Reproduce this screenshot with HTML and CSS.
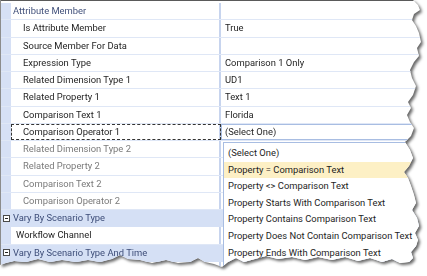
FILE: index.html
```html
<!DOCTYPE html>
<html lang="en">
<head>
  <meta charset="UTF-8">
  <title>Property Grid</title>
  <link rel="stylesheet" href="styles.css">
</head>
<body>
  <div class="frame">
    <div class="sheet">
      <div class="topline"></div>
      <div class="grid">
        <div class="row cat-plain"><div class="strip"></div><div class="name">Attribute Member</div><div class="value"></div></div>
        <div class="row"><div class="strip"></div><div class="name sub">Is Attribute Member</div><div class="value">True</div></div>
        <div class="row"><div class="strip"></div><div class="name sub">Source Member For Data</div><div class="value"></div></div>
        <div class="row"><div class="strip"></div><div class="name sub">Expression Type</div><div class="value">Comparison 1 Only</div></div>
        <div class="row"><div class="strip"></div><div class="name sub">Related Dimension Type 1</div><div class="value">UD1</div></div>
        <div class="row"><div class="strip"></div><div class="name sub">Related Property 1</div><div class="value">Text 1</div></div>
        <div class="row"><div class="strip"></div><div class="name sub">Comparison Text 1</div><div class="value">Florida</div></div>
        <div class="row focus"><div class="strip"></div><div class="name sub">Comparison Operator 1</div><div class="value">(Select One)</div></div>
        <div class="row dim"><div class="strip"></div><div class="name sub">Related Dimension Type 2</div><div class="value"></div></div>
        <div class="row dim"><div class="strip"></div><div class="name sub">Related Property 2</div><div class="value"></div></div>
        <div class="row dim"><div class="strip"></div><div class="name sub">Comparison Text 2</div><div class="value"></div></div>
        <div class="row dim"><div class="strip"></div><div class="name sub">Comparison Operator 2</div><div class="value"></div></div>
        <div class="row cat"><div class="strip"><span class="toggle"></span></div><div class="name">Vary By Scenario Type</div><div class="value"></div></div>
        <div class="row"><div class="strip"></div><div class="name top">Workflow Channel</div><div class="value"></div></div>
        <div class="row cat"><div class="strip"><span class="toggle"></span></div><div class="name">Vary By Scenario Type And Time</div><div class="value"></div></div>
        <div class="row"><div class="strip"></div><div class="name"></div><div class="value"></div></div>
      </div>

      <ul class="dropdown">
        <li>(Select One)</li>
        <li class="hot">Property = Comparison Text</li>
        <li>Property &lt;&gt; Comparison Text</li>
        <li>Property Starts With Comparison Text</li>
        <li>Property Contains Comparison Text</li>
        <li>Property Does Not Contain Comparison Text</li>
        <li>Property Ends With Comparison Text</li>
      </ul>
    </div>
  </div>
</body>
</html>
```

FILE: styles.css
```css
* { margin: 0; padding: 0; box-sizing: border-box; }
body { background: #fff; font-family: Roboto, 'Open Sans', sans-serif; font-size: 9.4px; color: #1e1e1e; width: 427px; height: 276px; overflow: hidden; }

.frame { filter: drop-shadow(2px 2px 1.5px rgba(0,0,0,0.6)); width: 424px; height: 272px; }
.sheet { position: relative; width: 424px; height: 272px; background: #fff; border-left: 1px solid #8c8c8c; overflow: hidden;
  clip-path: polygon(0 0, 413px 0, 418px 5px, 420px 10px, 414px 14px, 412px 20px, 416px 26px, 419px 33px, 421px 42px, 417px 48px, 419px 56px, 414px 62px, 410px 70px, 412px 78px, 416px 86px, 413px 95px, 408px 102px, 411px 108px, 407px 115px, 410px 122px, 414px 128px, 411px 136px, 405px 142px, 410px 150px, 413px 158px, 409px 166px, 404px 172px, 408px 178px, 411px 186px, 414px 195px, 416px 203px, 412px 210px, 417px 218px, 419px 226px, 415px 233px, 418px 240px, 416px 246px, 411px 252px, 413px 258px, 409px 262px, 400px 263px, 392px 259px, 382px 262px, 370px 258px, 358px 261px, 345px 257px, 332px 260px, 318px 257px, 305px 260px, 292px 257px, 278px 259px, 266px 256px, 255px 259px, 244px 262px, 236px 258px, 228px 262px, 222px 267px, 214px 264px, 205px 262px, 198px 258px, 190px 262px, 178px 263px, 166px 260px, 152px 263px, 140px 260px, 128px 259px, 120px 255px, 112px 259px, 100px 262px, 88px 260px, 76px 262px, 62px 260px, 50px 262px, 38px 259px, 26px 262px, 14px 261px, 6px 263px, 0 265px); }

.topline { height: 1px; background: #5a5a5a; }
.grid { display: flex; flex-direction: column; padding-top: 2px; }

.row { display: flex; flex: none; height: 17.25px; line-height: 16px; border-bottom: 1px solid #dfe7f6; white-space: nowrap; }
.strip { width: 10px; flex: none; background: #d6e0f5; display: flex; align-items: center; justify-content: center; }
.name { width: 210px; flex: none; padding-left: 2px; border-right: 2px solid #c7d4ee; color: #41507a; overflow: hidden; }
.name.sub { padding-left: 12px; color: #1e1e1e; }
.name.top { padding-left: 5px; color: #1e1e1e; }
.value { flex: 1; padding-left: 4px; }

.row.dim .name { color: #7a7a7a; }
.row.cat { background: #d5e0f5; border-bottom-color: #d5e0f5; }
.row.cat .name { color: #3d4d78; border-right-color: #d5e0f5; }
.toggle { width: 7px; height: 7px; border: 1px solid #4a4a4a; background: #fff; position: relative; }
.toggle::after { content: ''; position: absolute; left: 1px; right: 1px; top: 2px; height: 1px; background: #222; }

.row.focus .name { outline: 1px dashed #333; outline-offset: -1px; }
.row.focus .value { border: 1px solid #a8bde2; padding-left: 3px; line-height: 14px; }

.dropdown { position: absolute; left: 222px; top: 142px; width: 200px; bottom: 0; background: #fff; border: 1px solid #a8bde2; list-style: none; padding-top: 2px; }
.dropdown li { height: 16.6px; line-height: 16px; padding-left: 4px; white-space: nowrap; }
.dropdown li.hot { background: #fdf0c5; }
```
